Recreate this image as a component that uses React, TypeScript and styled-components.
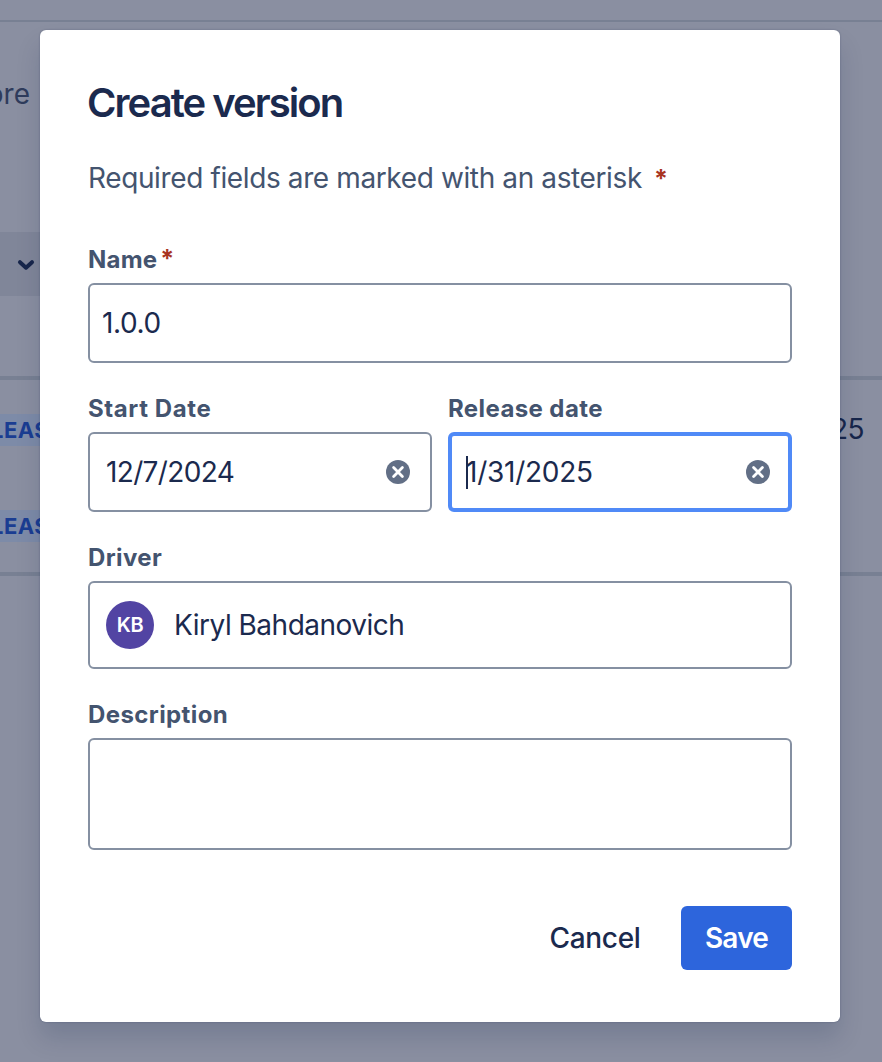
import React from "react";
import styled, { createGlobalStyle } from "styled-components";

const Global = createGlobalStyle`
  * { box-sizing: border-box; }
  body { margin: 0; font-family: Inter, "Liberation Sans", sans-serif; -webkit-font-smoothing: antialiased; }
`;

const Screen = styled.div`
  position: relative;
  height: 1062px;
  overflow: hidden;
  background: #8a8fa1;
`;

const Page = styled.div`
  display: flex;
  flex-direction: column;
  padding-top: 20px;
`;

const Rule = styled.div<{ $size: number }>`
  height: ${(p) => p.$size}px;
  background: #788093;
`;

const MoreLink = styled.div`
  height: 210px;
  padding-top: 55px;
  width: 30px;
  display: flex;
  justify-content: flex-end;
  font-size: 28px;
  line-height: 35px;
  color: #2f3c5c;
`;

const FilterButton = styled.div`
  width: 50px;
  height: 64px;
  margin-bottom: 80px;
  padding: 26px 0 0 17px;
  background: #808699;
  svg { display: block; }
`;

const Table = styled.div`
  display: flex;
  justify-content: space-between;
  height: 192px;
  padding-top: 34px;
`;

const Lozenges = styled.div`
  display: flex;
  flex-direction: column;
  gap: 64px;
`;

const Lozenge = styled.div`
  width: 64px;
  height: 32px;
  display: flex;
  justify-content: flex-end;
  background: #7d8ba8;
  color: #1a3d92;
  font-size: 22px;
  line-height: 33px;
  font-weight: 700;
  letter-spacing: 0.4px;
  padding-right: 15px;
`;

const DateCell = styled.div`
  padding: 0 18px 0 0;
  font-size: 28px;
  line-height: 31px;
  color: #17264b;
  letter-spacing: -0.6px;
`;

const Dialog = styled.section`
  position: absolute;
  left: 40px;
  top: 30px;
  width: 800px;
  height: 992px;
  padding: 48px;
  display: flex;
  flex-direction: column;
  background: #fff;
  border-radius: 6px;
  color: #1b2a4e;
  box-shadow: 0 16px 24px rgba(9, 30, 66, 0.15), 0 0 2px rgba(9, 30, 66, 0.31);
`;

const Title = styled.h1`
  margin: 0 0 0 -1px;
  height: 80px;
  font-size: 40px;
  line-height: 50px;
  font-weight: 560;
  letter-spacing: -1.95px;
`;

const Hint = styled.p`
  margin: 0;
  height: 86px;
  font-size: 28px;
  line-height: 41px;
  color: #44546f;
  white-space: nowrap;
  letter-spacing: -0.38px;
`;

const Star = styled.span<{ $gap: number }>`
  margin-left: ${(p) => p.$gap}px;
  color: #a8341f;
  font-weight: 700;
  font-size: 25px;
  line-height: 1;
`;

const Field = styled.div`
  display: flex;
  flex-direction: column;
`;

const Form = styled.form`
  display: flex;
  flex-direction: column;
  gap: 30px;
`;

const Columns = styled.div`
  display: grid;
  grid-template-columns: 1fr 1fr;
  gap: 16px;
`;

const Label = styled.label<{ $track?: number }>`
  height: 39px;
  padding-top: 1px;
  font-size: 24px;
  line-height: 30px;
  font-weight: 700;
  color: #44546f;
  letter-spacing: ${(p) => p.$track ?? 0.4}px;
`;

const Box = styled.div<{ $height: number; $pad: number; $focus?: boolean }>`
  height: ${(p) => p.$height}px;
  display: flex;
  align-items: center;
  border-radius: 6px;
  border: ${(p) => (p.$focus ? "4px solid #508af7" : "2px solid #8590a2")};
  padding: 0 ${(p) => p.$pad + (p.$focus ? 0 : 2)}px;
  font-size: 28px;
  line-height: 34px;
`;

const Value = styled.span<{ $track?: number }>`
  flex: 1;
  white-space: nowrap;
  letter-spacing: ${(p) => p.$track ?? 0}px;
`;

const Caret = styled.span`
  width: 2px;
  height: 33px;
  margin-right: -2px;
  background: #1b2a4e;
`;

const Clear = styled.svg`
  width: 24px;
  height: 24px;
  margin-right: 4px;
`;

const Avatar = styled.span`
  width: 48px;
  height: 48px;
  margin-right: 20px;
  border-radius: 50%;
  background: #5244a3;
  color: #fff;
  display: flex;
  align-items: center;
  justify-content: center;
  font-size: 20px;
  font-weight: 600;
  letter-spacing: -0.3px;
`;

const Actions = styled.div`
  display: flex;
  justify-content: flex-end;
  gap: 16px;
  margin-top: 56px;
`;

const Button = styled.button<{ $primary?: boolean }>`
  height: 64px;
  width: ${(p) => (p.$primary ? 111 : 140)}px;
  padding: 0;
  border: 0;
  border-radius: 6px;
  font: ${(p) => (p.$primary ? 600 : 500)} 28px/34px Inter, "Liberation Sans", sans-serif;
  letter-spacing: ${(p) => (p.$primary ? -0.8 : -0.3)}px;
  white-space: nowrap;
  background: ${(p) => (p.$primary ? "#2d65dc" : "transparent")};
  color: ${(p) => (p.$primary ? "#fff" : "#1b2a4e")};
`;

const ClearIcon = () => (
  <Clear viewBox="0 0 24 24">
    <circle cx="12" cy="12" r="12" fill="#626f86" />
    <path d="M7.6 7.6 16.4 16.4 M16.4 7.6 7.6 16.4" stroke="#fff" strokeWidth="2.8" strokeLinecap="round" />
  </Clear>
);

export default function App() {
  return (
    <Screen>
      <Global />
      <Page>
        <Rule $size={2} />
        <MoreLink>more</MoreLink>
        <FilterButton>
          <svg width="18" height="13" viewBox="0 0 18 13">
            <path d="M3 4.2 9 9.7 15 4.2" fill="none" stroke="#17264b" strokeWidth="4" strokeLinecap="round" strokeLinejoin="round" />
          </svg>
        </FilterButton>
        <Rule $size={4} />
        <Table>
          <Lozenges>
            <Lozenge>RELEAS</Lozenge>
            <Lozenge>RELEAS</Lozenge>
          </Lozenges>
          <DateCell>2025</DateCell>
        </Table>
        <Rule $size={4} />
      </Page>

      <Dialog>
        <Title>Create version</Title>
        <Hint>
          Required fields are marked with an asterisk<Star $gap={12}>*</Star>
        </Hint>
        <Form>
          <Field>
            <Label $track={0.2}>Name<Star $gap={3}>*</Star></Label>
            <Box $height={80} $pad={10}><Value $track={-0.4}>1.0.0</Value></Box>
          </Field>
          <Columns>
            <Field>
              <Label $track={0.6}>Start Date</Label>
              <Box $height={80} $pad={14}><Value $track={-0.65}>12/7/2024</Value><ClearIcon /></Box>
            </Field>
            <Field>
              <Label>Release date</Label>
              <Box $height={80} $pad={14} $focus><Caret /><Value $track={-0.25}>1/31/2025</Value><ClearIcon /></Box>
            </Field>
          </Columns>
          <Field>
            <Label>Driver</Label>
            <Box $height={88} $pad={14}><Avatar>KB</Avatar><Value $track={-0.5}>Kiryl Bahdanovich</Value></Box>
          </Field>
          <Field>
            <Label>Description</Label>
            <Box $height={112} $pad={14} />
          </Field>
        </Form>
        <Actions>
          <Button type="button">Cancel</Button>
          <Button type="button" $primary>Save</Button>
        </Actions>
      </Dialog>
    </Screen>
  );
}
